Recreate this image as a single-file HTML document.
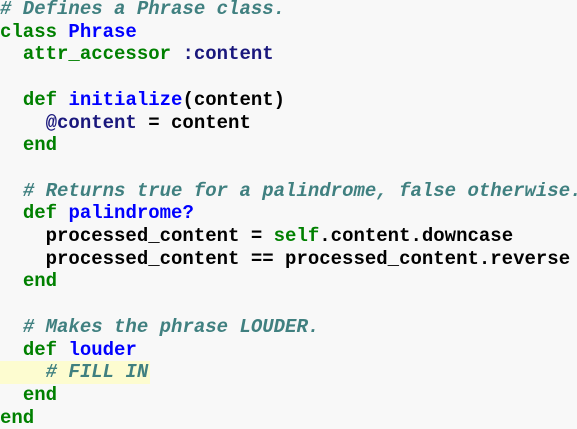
<!DOCTYPE html>
<html><head><style>
html,body{margin:0;padding:0;background:#f8f8f8;width:577px;height:422px;overflow:hidden}
pre{margin:0;position:absolute;top:-2px;left:0;font-family:"Liberation Mono",monospace;font-weight:bold;font-size:19px;line-height:22.7px;color:#000}
.c{color:#408080;font-style:italic}
.k{color:#008000}
.n{color:#0000ff}
.s{color:#19177c}
.h{background:#fdfcd0;display:inline-block;width:150px}
</style></head><body>
<pre><span class="c"># Defines a Phrase class.</span>
<span class="k">class</span> <span class="n">Phrase</span>
  <span class="k">attr_accessor</span> <span class="s">:content</span>

  <span class="k">def</span> <span class="n">initialize</span>(content)
    <span class="s">@content</span> = content
  <span class="k">end</span>

  <span class="c"># Returns true for a palindrome, false otherwise.</span>
  <span class="k">def</span> <span class="n">palindrome?</span>
    processed_content = <span class="k">self</span>.content.downcase
    processed_content == processed_content.reverse
  <span class="k">end</span>

  <span class="c"># Makes the phrase LOUDER.</span>
  <span class="k">def</span> <span class="n">louder</span>
<span class="h">    <span class="c"># FILL IN</span></span>
  <span class="k">end</span>
<span class="k">end</span></pre>
</body></html>
